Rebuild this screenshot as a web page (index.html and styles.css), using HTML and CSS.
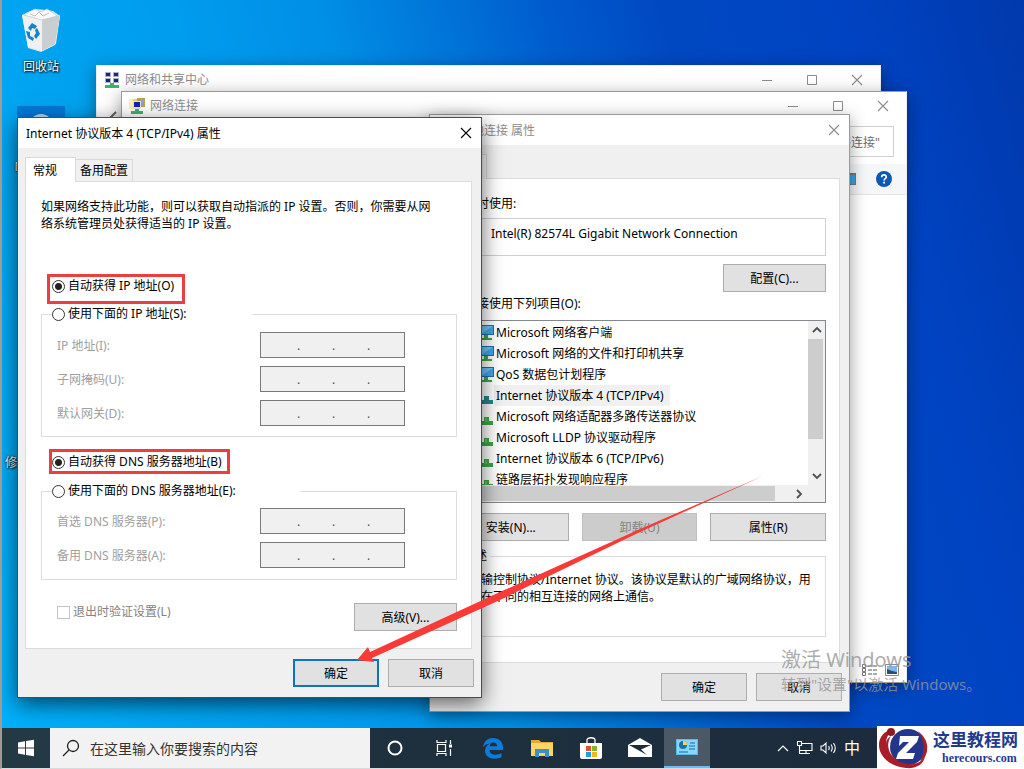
FILE: index.html
```
<!DOCTYPE html>
<html lang="zh-CN">
<head>
  <meta charset="UTF-8">
  <meta name="viewport" content="width=device-width, initial-scale=1.0">
  <title>Internet 协议版本 4 (TCP/IPv4) 属性</title>
  <link rel="stylesheet" href="styles.css">
</head>
<body>
  <!-- shared icons -->
  <svg class="defs" aria-hidden="true">
    <symbol id="i-close" viewBox="0 0 12 12"><path d="M1 1l10 10M11 1L1 11" fill="none" stroke="currentColor" stroke-width="1.1"/></symbol>
    <symbol id="i-max" viewBox="0 0 12 12"><path d="M1.5 1.5h9v9h-9z" fill="none" stroke="currentColor"/></symbol>
    <symbol id="i-min" viewBox="0 0 12 12"><path d="M1 6.5h10" fill="none" stroke="currentColor"/></symbol>
    <symbol id="i-client" viewBox="0 0 16 16">
      <path d="M1 0h15v10H1z" fill="#1f6fb2"/><path d="M2 1h13v8H2z" fill="#3fa9ee"/><path d="M2 1h13L3 9H2z" fill="#74c6f8"/>
      <path d="M6 10h4v3h4v2H1v-2h5z" fill="#3fa648"/>
    </symbol>
    <symbol id="i-proto" viewBox="0 0 16 16"><path d="M6 8h5v4h4v4H1v-4h5z" fill="#3fa648"/><path d="M7 9h2v4H7z" fill="#5fc25f"/></symbol>
    <symbol id="i-proto-sel" viewBox="0 0 16 16"><path d="M6 8h5v4h4v4H1v-4h5z" fill="#25868d"/></symbol>
    <symbol id="i-up" viewBox="0 0 10 10"><path d="M1 7l4-4 4 4" fill="none" stroke="#505050" stroke-width="1.8"/></symbol>
    <symbol id="i-down" viewBox="0 0 10 10"><path d="M1 3l4 4 4-4" fill="none" stroke="#505050" stroke-width="1.8"/></symbol>
    <symbol id="i-right" viewBox="0 0 10 10"><path d="M3 1l4 4-4 4" fill="none" stroke="#505050" stroke-width="1.8"/></symbol>
  </svg>

  <main class="desktop">
    <div class="shortcut shortcut-bin">
      <svg width="40" height="46" viewBox="0 0 40 46">
        <path d="M1 7l6-3 8-3 9 1 8 1 7 5-5 29-14 7-13-4z" fill="#e4e6e8"/>
        <path d="M1 7l20 4 18-4-4 29-14 7-14-4z" fill="#eef0f1"/>
        <path d="M21 11l18-4-5 29-13 7z" fill="#c9ced1"/>
        <path d="M3 7l7-4 4-2 6 3 6-3 5 3 5 4-15 4z" fill="#fafafa" stroke="#bfc5c9" stroke-width=".7"/>
        <path d="M9 6l5 2 4-4 4 4 6-3" fill="none" stroke="#b3aca5" stroke-width=".8"/>
        <path d="M7 20l4-5 5 3-2 3-3-1-1 3zM16 20l3 6-4 5-2-3 2-3-1-3zM5 23l4 1v4l4 2-1 3-5-3z" fill="#1582cf"/>
      </svg>
      <span>回收站</span>
    </div>
    <div class="shortcut shortcut-edge">
      <div class="tile"><svg width="48" height="48" viewBox="0 0 48 48"><circle cx="24" cy="20" r="12" fill="#b7d9f3"/></svg></div>
      <span>Microsoft</span>
    </div>
    <div class="shortcut shortcut-fix"><span>修复开始菜单</span></div>

    <section class="window win-center">
      <header class="titlebar inactive">
        <svg width="16" height="16" viewBox="0 0 16 16">
          <path d="M1 0h6v5H1zM9 0h6v5H9zM1 6h6v5H1zM9 6h6v5H9z" fill="#aab4cc"/>
          <path d="M2 1h4v3H2zM10 1h4v3h-4zM2 7h4v3H2zM10 7h4v3h-4z" fill="#1a2390"/>
          <path d="M6 11h4v2h5v3H1v-3h5z" fill="#3cb371"/>
        </svg>
        <h2>网络和共享中心</h2>
        <div class="controls">
          <button aria-label="最小化"><svg><use href="#i-min"/></svg></button>
          <button aria-label="最大化"><svg><use href="#i-max"/></svg></button>
          <button aria-label="关闭"><svg><use href="#i-close"/></svg></button>
        </div>
      </header>
      <div class="nav">
        <svg width="16" height="14" viewBox="0 0 16 14"><path d="M8 1L2 7l6 6M2 7h14" fill="none" stroke="#666" stroke-width="2"/></svg>
      </div>
    </section>

    <section class="window win-connections">
      <header class="titlebar inactive">
        <svg width="16" height="16" viewBox="0 0 16 16">
          <path d="M0 1h9v10H0z" fill="#efd565"/><path d="M0 1h4v10H0z" fill="#fbf0b5"/>
          <path d="M8 0h8v9H8z" fill="#b9a545"/><path d="M10 2h5v5h-5z" fill="#8fa2c4"/>
          <path d="M4 3h8v8H4z" fill="#dfe4ee"/><path d="M5 4h6v5H5z" fill="#1520b0"/>
          <path d="M6 11h4v2h4v3H2v-3h4z" fill="#3cb371"/>
        </svg>
        <h2>网络连接</h2>
        <div class="controls">
          <button aria-label="最小化"><svg><use href="#i-min"/></svg></button>
          <button aria-label="最大化"><svg><use href="#i-max"/></svg></button>
          <button aria-label="关闭"><svg><use href="#i-close"/></svg></button>
        </div>
      </header>
      <div class="address"><input type="text" value='搜索"网络连接"' aria-label="搜索"></div>
      <div class="toolbar">
        <svg width="16" height="12" viewBox="0 0 16 12"><path d="M0 0h16v12H0z" fill="#6b7a86"/><path d="M1 2h14v9H1z" fill="#3fa3e0"/></svg>
        <svg width="16" height="16" viewBox="0 0 16 16"><circle cx="8" cy="8" r="8" fill="#0a5ab4"/><path d="M5.7 6.2c0-3 4.6-3 4.6-.2 0 1.700-2.200 1.600-2.200 3.400" fill="none" stroke="#fff" stroke-width="1.700"/><path d="M7.200 10.800h1.800v1.700H7.200z" fill="#fff"/></svg>
      </div>
      <div class="statusbar">
        <svg width="16" height="12" viewBox="0 0 16 12"><path d="M.5.5h3v3h-3zM.5 4.500h3v3h-3zM.5 8.500h3v3h-3z" fill="none" stroke="#777"/><path d="M6 2h4M11 2h4M6 6h4M11 6h4M6 10h4M11 10h4" stroke="#555"/></svg>
        <svg width="14" height="12" viewBox="0 0 14 12"><path d="M.5.5h13v11H.5z" fill="#fff" stroke="#888"/><path d="M2 2h10v8H2z" fill="#79b8ee"/><path d="M2 5l5 2 5 1v2H2z" fill="#24506e"/></svg>
      </div>
    </section>

    <section class="window win-adapter">
      <header class="titlebar inactive">
        <svg width="16" height="16"><use href="#i-client"/></svg>
        <h2>本地连接 属性</h2>
        <div class="controls"><button aria-label="关闭"><svg><use href="#i-close"/></svg></button></div>
      </header>
      <div class="tabs" role="tablist"><button class="tab active" role="tab">网络</button></div>
      <div class="pane">
        <p>连接时使用:</p>
        <div class="adapter"><svg width="16" height="16"><use href="#i-client"/></svg>Intel(R) 82574L Gigabit Network Connection</div>
        <div class="right"><button class="btn btn-mid">配置(C)...</button></div>
        <p class="items-label">此连接使用下列项目(O):</p>
        <div class="listbox">
          <ul>
            <li><label><input type="checkbox" checked><svg><use href="#i-client"/></svg><span>Microsoft 网络客户端</span></label></li>
            <li><label><input type="checkbox" checked><svg><use href="#i-client"/></svg><span>Microsoft 网络的文件和打印机共享</span></label></li>
            <li><label><input type="checkbox" checked><svg><use href="#i-client"/></svg><span>QoS 数据包计划程序</span></label></li>
            <li class="selected"><label><input type="checkbox" checked><svg><use href="#i-proto-sel"/></svg><span>Internet 协议版本 4 (TCP/IPv4)</span></label></li>
            <li><label><input type="checkbox"><svg><use href="#i-proto"/></svg><span>Microsoft 网络适配器多路传送器协议</span></label></li>
            <li><label><input type="checkbox" checked><svg><use href="#i-proto"/></svg><span>Microsoft LLDP 协议驱动程序</span></label></li>
            <li><label><input type="checkbox" checked><svg><use href="#i-proto"/></svg><span>Internet 协议版本 6 (TCP/IPv6)</span></label></li>
            <li><label><input type="checkbox" checked><svg><use href="#i-proto"/></svg><span>链路层拓扑发现响应程序</span></label></li>
          </ul>
          <div class="vbar"><svg><use href="#i-up"/></svg><div class="vthumb"></div><svg><use href="#i-down"/></svg></div>
          <div class="hbar"><div class="hthumb"></div><svg><use href="#i-right"/></svg></div>
        </div>
        <div class="btn-row">
          <button class="btn">安装(N)...</button>
          <button class="btn" disabled>卸载(U)</button>
          <button class="btn">属性(R)</button>
        </div>
        <fieldset class="desc">
          <legend>描述</legend>
          <p>传输控制协议/Internet 协议。该协议是默认的广域网络协议，用于在不同的相互连接的网络上通信。</p>
        </fieldset>
      </div>
      <footer class="actions">
        <button class="btn">确定</button>
        <button class="btn">取消</button>
      </footer>
    </section>

    <section class="window win-ipv4">
      <header class="titlebar">
        <h2>Internet 协议版本 4 (TCP/IPv4) 属性</h2>
        <div class="controls"><button aria-label="关闭"><svg><use href="#i-close"/></svg></button></div>
      </header>
      <div class="tabs" role="tablist">
        <button class="tab active" role="tab" aria-selected="true">常规</button>
        <button class="tab" role="tab">备用配置</button>
      </div>
      <form class="pane">
        <p class="intro">如果网络支持此功能，则可以获取自动指派的 IP 设置。否则，你需要从网络系统管理员处获得适当的 IP 设置。</p>

        <label class="choice marked marked-ip"><input type="radio" name="ip" checked>自动获得 IP 地址(O)</label>
        <fieldset class="group group-ip">
          <legend><label class="choice"><input type="radio" name="ip">使用下面的 IP 地址(S):</label></legend>
          <div class="field">
            <label for="ip1">IP 地址(I):</label>
            <div class="octets"><input id="ip1" disabled><i>.</i><input aria-label="IP 2" disabled><i>.</i><input aria-label="IP 3" disabled><i>.</i><input aria-label="IP 4" disabled></div>
          </div>
          <div class="field">
            <label for="mask1">子网掩码(U):</label>
            <div class="octets"><input id="mask1" disabled><i>.</i><input aria-label="掩码 2" disabled><i>.</i><input aria-label="掩码 3" disabled><i>.</i><input aria-label="掩码 4" disabled></div>
          </div>
          <div class="field">
            <label for="gw1">默认网关(D):</label>
            <div class="octets"><input id="gw1" disabled><i>.</i><input aria-label="网关 2" disabled><i>.</i><input aria-label="网关 3" disabled><i>.</i><input aria-label="网关 4" disabled></div>
          </div>
        </fieldset>

        <label class="choice marked marked-dns"><input type="radio" name="dns" checked>自动获得 DNS 服务器地址(B)</label>
        <fieldset class="group group-dns">
          <legend><label class="choice"><input type="radio" name="dns">使用下面的 DNS 服务器地址(E):</label></legend>
          <div class="field">
            <label for="dns1">首选 DNS 服务器(P):</label>
            <div class="octets"><input id="dns1" disabled><i>.</i><input aria-label="首选 2" disabled><i>.</i><input aria-label="首选 3" disabled><i>.</i><input aria-label="首选 4" disabled></div>
          </div>
          <div class="field">
            <label for="alt1">备用 DNS 服务器(A):</label>
            <div class="octets"><input id="alt1" disabled><i>.</i><input aria-label="备用 2" disabled><i>.</i><input aria-label="备用 3" disabled><i>.</i><input aria-label="备用 4" disabled></div>
          </div>
        </fieldset>

        <div class="options">
          <label class="choice off"><input type="checkbox" disabled>退出时验证设置(L)</label>
          <button class="btn btn-mid" type="button">高级(V)...</button>
        </div>
      </form>
      <footer class="actions">
        <button class="btn primary">确定</button>
        <button class="btn">取消</button>
      </footer>
    </section>

    <!-- arrow pointing at the OK button -->
    <svg class="arrow" width="420" height="200" viewBox="350 470 420 200">
      <path d="M357 660L368 647L370 652L500 592L640 529L765 475L640 532L500 600L372 658L374 662z" fill="#f93a37"/>
    </svg>

    <div class="activate">
      <strong>激活 Windows</strong>
      <span>转到"设置"以激活 Windows。</span>
    </div>
  </main>

  <nav class="taskbar">
    <button class="start" aria-label="开始">
      <svg width="18" height="18" viewBox="0 0 18 18"><path d="M1 3.500l7-1.200v6.200H1zM9 2.100l8-1.300v7.700H9zM1 9.500h7v6.200l-7-1.200zM9 9.500h8v7.700l-8-1.300z" fill="#fff"/></svg>
    </button>
    <label class="search">
      <svg width="18" height="18" viewBox="0 0 18 18"><circle cx="11" cy="7" r="5.500" fill="none" stroke="#222" stroke-width="1.300"/><path d="M7 11l-6 6" stroke="#222" stroke-width="1.300"/></svg>
      <input type="text" placeholder="在这里输入你要搜索的内容" aria-label="搜索">
    </label>
    <div class="apps">
      <button aria-label="Cortana"><svg width="18" height="18" viewBox="0 0 18 18"><circle cx="9" cy="9" r="6.500" fill="none" stroke="#fff" stroke-width="2"/></svg></button>
      <button aria-label="任务视图"><svg width="18" height="18" viewBox="0 0 18 18"><path d="M2 1v2.500h9V1M2 17v-2.500h9V17M2.500 5.500h8v7h-8zM15.500 1v4M15.500 10v7" fill="none" stroke="#fff" stroke-width="1.200"/><path d="M14 5.500h3v3h-3z" fill="#fff"/></svg></button>
      <button aria-label="Edge"><svg width="22" height="22" viewBox="0 0 22 22"><path d="M1 10C2 4 6 1 11 1c6 0 10 4 10 9v3H7.500c.3 3.500 3 4.800 6 4.800 2.300 0 4.500-.7 6-1.700v4c-2 1.100-4.300 1.600-7 1.600C7 21.700 3 18.500 3 14c0-3.500 2-6.200 5-7.500C5 6.800 2.500 8 1 10zm6.700-.7H15C15 6.800 13.800 5.500 11.500 5.500S8 7.200 7.700 9.300z" fill="#0c7bd9"/></svg></button>
      <button aria-label="文件资源管理器"><svg width="22" height="20" viewBox="0 0 22 20"><path d="M0 2h8l2 2h12v14H0z" fill="#e8a72d"/><path d="M0 5h22v13H0z" fill="#fbd667"/><path d="M4 11h14v8h-4v-4H8v4H4z" fill="#3f8fc6"/></svg></button>
      <button aria-label="Microsoft Store"><svg width="24" height="24" viewBox="0 0 24 24"><path d="M8 7V4c0-3 8-3 8 0v3" fill="none" stroke="#fff" stroke-width="1.300"/><path d="M1 7h22v14q0 2-2 2H3q-2 0-2-2z" fill="#fff"/><path d="M7 10h5v5H7z" fill="#e5512b"/><path d="M13 10h5v5h-5z" fill="#7bb82b"/><path d="M7 16h5v5H7z" fill="#1aa0e1"/><path d="M13 16h5v5h-5z" fill="#f4b51f"/></svg></button>
      <button aria-label="邮件"><svg width="24" height="20" viewBox="0 0 24 20"><path d="M0 7l12-7 12 7v12H0z" fill="#fff"/><path d="M1 7h22l-10 4.500 6 5.500-9-5z" fill="#1d2c39"/></svg></button>
      <button class="running" aria-label="控制面板"><svg width="22" height="16" viewBox="0 0 22 16"><path d="M0 0h22v16H0z" fill="#5cb9ec"/><path d="M1 1h20v14H1z" fill="#8ad6f8"/><circle cx="7" cy="6" r="4" fill="#1b6fae"/><path d="M7 6V2a4 4 0 0 1 4 4z" fill="#f6d460"/><path d="M14 4h5M13 7h6M13 10h6M3 13h9" stroke="#3a8fca" stroke-width="1.500"/></svg></button>
    </div>
    <div class="tray">
      <svg width="12" height="8" viewBox="0 0 12 8"><path d="M1 7l5-5 5 5" fill="none" stroke="#fff" stroke-width="1.200"/></svg>
      <svg width="17" height="16" viewBox="0 0 17 16"><path d="M5 3.500h11v7H4M10 10.500v3M6 13.500h8M1.500 1.500h4v4h-4zM3.500 5.500v8h3" fill="none" stroke="#fff" stroke-width="1.100"/></svg>
      <svg width="17" height="14" viewBox="0 0 17 14"><path d="M1 5h2l3-3v10L3 9H1zM8.500 5q1.500 2 0 4M11 3.500q2.500 3.500 0 7M13.500 2q3.500 5 0 10" fill="none" stroke="#fff" stroke-width="1.100"/></svg>
      <span>中</span>
    </div>
  </nav>

  <aside class="brand">
    <svg width="54" height="43" viewBox="0 0 54 43">
      <circle cx="31" cy="21" r="18" fill="#24368c"/>
      <path d="M14 10C8 19 12 31 23 36c9 4 19 3 25-5-2 8-10 12-19 11C14 41 2 31 2 19 2 11 7 5 16 3c-4 4-7 8-7 15 0-4 2-6 5-8z" fill="#a81d27"/>
      <path d="M41 5q11 9 9 20-1 7-7 11 8-16-2-31z" fill="#a81d27"/>
      <circle cx="14" cy="6" r="4" fill="#8f1720"/>
      <path d="M23 10h19l-2 6-11 11h9l-2 6H19l2-6 11-11h-6l-4 4z" fill="#fff"/>
    </svg>
    <div><b>这里教程网</b><em>herecours.com</em></div>
  </aside>
</body>
</html>
```
FILE: styles.css
```
* {
  box-sizing: border-box;
}
body {
  margin: 0;
  height: 100vh;
  display: flex;
  flex-direction: column;
  overflow: hidden;
  border-left: 2px solid #a39a92;
  border-bottom: 1px solid #d8dadc;
  font-family: "Noto Sans", "Noto Sans CJK SC", sans-serif;
  font-size: 12px;
  line-height: 17px;
  color: #000;
}
h2, p, ul, fieldset, legend {
  margin: 0;
  padding: 0;
}
button, input {
  font: inherit;
  color: inherit;
}
.defs {
  position: absolute;
  width: 0;
  height: 0;
}
.desktop {
  position: relative;
  flex: 1;
  overflow: hidden;
  background: linear-gradient(75deg, #00b0fa 0%, #00a4f0 16%, #009cee 30%, #008fe6 42%, #0074d8 52%, #005dce 60%, #0048c2 70%, #0043c2 85%, #0039ac 100%);
}

/* desktop shortcuts */
.shortcut {
  position: absolute;
  left: 0;
  width: 78px;
  display: flex;
  flex-direction: column;
  align-items: center;
  color: #fff;
  text-shadow: 1px 1px 2px #000, 0 0 2px #000;
}
.shortcut-bin {
  top: 8px;
  gap: 4px;
}
.shortcut-edge {
  top: 106px;
  gap: 4px;
}
.shortcut-fix {
  top: 454px;
}
.tile {
  background: #0078d7;
  height: 48px;
}

/* windows */
.window {
  position: absolute;
  isolation: isolate;
  display: flex;
  flex-direction: column;
  background: #fff;
  border: 1px solid #9a9a9a;
  box-shadow: 0 4px 16px rgba(0, 0, 0, 0.4);
}
.win-center {
  left: 94px;
  top: 65px;
  width: 785px;
  height: 560px;
  border-color: #e8eef5;
}
.win-connections {
  left: 119px;
  top: 91px;
  width: 786px;
  height: 592px;
  border-right-color: #e8eef5;
}
.win-adapter {
  left: 427px;
  top: 114px;
  width: 421px;
  height: 598px;
  background: #f0f0f0;
}
.win-ipv4 {
  left: 15px;
  top: 117px;
  width: 465px;
  height: 581px;
  background: #f0f0f0;
  border-color: #4c4c4c;
  box-shadow: 0 6px 20px rgba(0, 0, 0, 0.6);
}
.titlebar {
  display: flex;
  align-items: center;
  height: 30px;
  padding: 0 8px;
  gap: 6px;
  background: #fff;
  flex: none;
}
.win-center .titlebar, .win-connections .titlebar {
  height: 27px;
  gap: 5px;
  background: none;
  padding: 0 1px 0 7px;
}
.titlebar h2 {
  flex: 1;
  font-size: 12px;
  font-weight: normal;
}
.titlebar.inactive {
  color: #8c8c8c;
}
.controls {
  display: flex;
}
.controls button {
  width: 45px;
  height: 27px;
  padding: 0;
  border: none;
  background: none;
  line-height: 0;
}
.win-adapter .controls button, .win-ipv4 .controls button {
  width: 14px;
}
.controls svg {
  width: 12px;
  height: 12px;
}
.nav {
  padding: 18px 11px;
}
.address {
  display: flex;
  justify-content: flex-end;
  padding: 7px 12px 7px 0;
}
.address input {
  width: 200px;
  height: 31px;
  padding: 0 13px;
  border: 1px solid #d0d0d0;
  color: #6d6d6d;
  text-align: right;
}
.toolbar {
  display: flex;
  justify-content: flex-end;
  align-items: center;
  gap: 20px;
  height: 31px;
  padding-right: 14px;
  background: #f5f6f7;
  border-bottom: 1px solid #e3e4e6;
}
.statusbar {
  display: flex;
  justify-content: flex-end;
  gap: 7px;
  margin-top: auto;
  padding: 6px 7px;
}

/* tabs and panes */
.tabs {
  display: flex;
  align-items: flex-end;
  padding: 9px 7px 0;
}
.tab {
  height: 22px;
  padding: 0 4px;
  border: 1px solid #d9d9d9;
  border-bottom: none;
  background: #f0f0f0;
}
.tab.active {
  height: 25px;
  margin-bottom: -1px;
  padding: 0 18px 0 7px;
  background: #fff;
  z-index: 1;
}
.tab + .tab {
  border-left: none;
}
.pane {
  flex: 1;
  margin: 0 9px 0 7px;
  padding: 16px 14px 0 15px;
  background: #fff;
  border: 1px solid #dcdcdc;
}
.win-adapter .pane {
  margin-left: 8px;
  padding: 16px 13px 0 14px;
}
.win-adapter .tab.active {
  background: #f6f6f6;
  padding-right: 17px;
}
.intro {
  padding-right: 18px;
}
.actions {
  display: flex;
  justify-content: flex-end;
  gap: 9px;
  padding: 10px 7px;
}
.btn {
  height: 28px;
  padding: 0;
  border: 1px solid #adadad;
  background: #e1e1e1;
}
.btn:disabled {
  background: #cccccc;
  border-color: #bfbfbf;
  color: #838383;
}
.btn.primary {
  border: 2px solid #0f74bd;
}
.actions .btn {
  width: 86px;
}
.btn-mid {
  width: 103px;
}

/* adapter properties */
.adapter {
  display: flex;
  gap: 13px;
  height: 38px;
  margin-top: 6px;
  padding: 6px 8px;
  border: 1px solid #d0d0d0;
}
.right {
  display: flex;
  justify-content: flex-end;
  margin-top: 8px;
}
.items-label {
  margin-top: 3px;
}
.listbox {
  display: grid;
  grid-template-columns: 1fr 17px;
  grid-template-rows: 1fr 17px;
  height: 183px;
  margin-top: 8px;
  border: 1px solid #828790;
}
.listbox ul {
  min-height: 0;
  height: 164px;
  padding-top: 1px;
  overflow: hidden;
  list-style: none;
}
.listbox label {
  display: flex;
  align-items: center;
  height: 21px;
  padding-left: 4px;
}
.listbox li input {
  width: 13px;
  height: 13px;
  margin: 0 7px 0 0;
}
.listbox li svg {
  width: 16px;
  height: 16px;
}
.listbox li span {
  padding: 2px 6px 2px 2px;
}
.selected span {
  background: #f0f0f0;
}
.vbar {
  display: flex;
  flex-direction: column;
  align-items: center;
  background: #f0f0f0;
}
.vbar svg, .hbar svg {
  width: 10px;
  height: 10px;
  margin: 4px;
}
.vthumb {
  align-self: stretch;
  height: 100px;
  margin-right: 2px;
  margin-bottom: auto;
  background: #cdcdcd;
}
.hbar {
  grid-column: 1 / -1;
  display: flex;
  align-items: center;
  background: #f0f0f0;
}
.hthumb {
  flex: 1;
  height: 15px;
  margin-right: 15px;
  background: #cdcdcd;
}
.hbar svg {
  margin-right: 21px;
}
.btn-row {
  display: flex;
  gap: 13px;
  margin-top: 10px;
}
.btn-row .btn {
  flex: 1;
}
.desc {
  height: 88px;
  margin-top: 8px;
  padding: 8px 12px 0 15px;
  border: 1px solid #dcdcdc;
}
.desc legend {
  margin-left: -9px;
  padding: 0 3px;
  line-height: 14px;
}

/* IPv4 form */
.choice {
  display: flex;
  align-items: center;
  gap: 3px;
  line-height: 14px;
}
.choice input {
  appearance: none;
  width: 13px;
  height: 13px;
  margin: 0;
  background: #fff;
  border: 1px solid #333;
}
.choice input[type="radio"] {
  border-radius: 50%;
}
.choice input[type="radio"]:checked {
  background: radial-gradient(circle, #222 0 3px, #fff 4px);
}
.choice input:disabled {
  border-color: #c4c4c4;
}
.marked {
  width: fit-content;
  border: 3px solid #ea3f3f;
}
.marked-ip {
  margin: 42px 0 0 6px;
  padding: 2px 8px 8px 2px;
}
.marked-dns {
  margin: 12px 0 0 8px;
  padding: 3px 5px 2px 0;
}
.group {
  display: flex;
  flex-direction: column;
  gap: 8px;
  padding: 10px;
  border: 1px solid #dcdcdc;
}
.group-ip {
  margin-top: 3px;
  padding-top: 11px;
}
.group-dns {
  margin-top: 10px;
  padding-bottom: 11px;
}
.group-ip legend {
  width: 200px;
}
.group-dns legend {
  width: 248px;
}
.field {
  display: grid;
  grid-template-columns: 203px 145px;
  align-items: center;
  padding-left: 5px;
  color: #a0a0a0;
}
.octets {
  display: flex;
  align-items: center;
  height: 26px;
  padding: 0 2px 0 4px;
  border: 1px solid #7a7a7a;
  background: #f0f0f0;
}
.octets input {
  flex: 1;
  min-width: 0;
  width: 0;
  padding: 0;
  border: none;
  background: none;
}
.octets i {
  width: 3px;
  font-style: normal;
  color: #555;
}
.options {
  display: flex;
  justify-content: space-between;
  align-items: flex-start;
  margin-top: 23px;
  padding-left: 16px;
}
.off {
  padding-top: 2px;
  color: #838383;
}

/* overlays */
.arrow {
  position: absolute;
  left: 348px;
  top: 470px;
}
.activate {
  position: absolute;
  left: 779px;
  top: 646px;
  color: rgba(150, 150, 150, 0.8);
}
.activate strong, .activate span {
  display: block;
}
.activate strong {
  font-size: 20px;
  font-weight: normal;
  line-height: 28px;
}
.activate span {
  font-size: 15px;
  line-height: 20px;
}

/* taskbar */
.taskbar {
  display: flex;
  flex: none;
  height: 40px;
  background: linear-gradient(90deg, #20343e, #1b2a3d);
}
.taskbar button {
  width: 49px;
  padding: 0;
  border: none;
  background: none;
  line-height: 0;
}
.taskbar .start {
  width: 48px;
  background: #233a44;
}
.search {
  display: flex;
  align-items: center;
  gap: 10px;
  width: 320px;
  padding-left: 12px;
  background: #f2f2f2;
}
.search input {
  flex: 1;
  padding: 0;
  border: none;
  background: none;
  font-size: 14px;
}
.search input::placeholder {
  color: #333;
}
.apps {
  display: flex;
}
.taskbar .running {
  width: 46px;
  background: #4a5965;
  border-bottom: 2px solid #76b9ed;
}
.tray {
  display: flex;
  align-items: center;
  gap: 7px;
  margin-left: auto;
  padding-right: 164px;
  color: #fff;
  font-size: 16px;
}

.brand {
  position: absolute;
  right: 0;
  bottom: 0;
  display: flex;
  align-items: center;
  gap: 2px;
  width: 147px;
  height: 43px;
  background: #fff;
  color: #1f3a8f;
}
.brand b, .brand em {
  display: block;
  white-space: nowrap;
}
.brand b {
  font-size: 17px;
  line-height: 20px;
}
.brand em {
  padding-left: 9px;
  font: bold 12px/16px "Liberation Serif", serif;
}
```
